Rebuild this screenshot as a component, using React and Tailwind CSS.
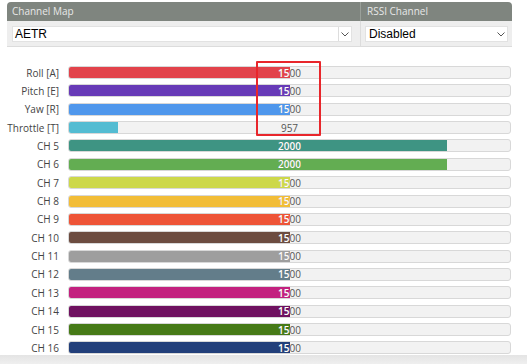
import React from 'react';

const channels = [
  { label: 'Roll [A]', value: 1500, color: '#e2434b' },
  { label: 'Pitch [E]', value: 1500, color: '#673ab7' },
  { label: 'Yaw [R]', value: 1500, color: '#4f97ec' },
  { label: 'Throttle [T]', value: 957, color: '#54bcd2' },
  { label: 'CH 5', value: 2000, color: '#3e9483' },
  { label: 'CH 6', value: 2000, color: '#63ad52' },
  { label: 'CH 7', value: 1500, color: '#cdd84a' },
  { label: 'CH 8', value: 1500, color: '#f2bd37' },
  { label: 'CH 9', value: 1500, color: '#ee5437' },
  { label: 'CH 10', value: 1500, color: '#6c4c40' },
  { label: 'CH 11', value: 1500, color: '#9e9e9e' },
  { label: 'CH 12', value: 1500, color: '#637d8a' },
  { label: 'CH 13', value: 1500, color: '#c3217f' },
  { label: 'CH 14', value: 1500, color: '#6f1160' },
  { label: 'CH 15', value: 1500, color: '#467a17' },
  { label: 'CH 16', value: 1500, color: '#223f7a' },
];

const TRACK = 441;

function Chevron() {
  return (
    <svg width="8" height="5" viewBox="0 0 8 5" className="text-[#555]">
      <polyline points="0.5,0.5 4,4 7.5,0.5" fill="none" stroke="currentColor" strokeWidth="1" />
    </svg>
  );
}

function ChannelBar({ label, value, color }) {
  // range shown is 800..2200
  const fill = Math.round((TRACK * (value - 800)) / 1400);
  return (
    <div className="flex items-center h-[13px]">
      <div className="w-[59px] mr-[9px] text-right text-[10px] leading-none text-[#444] whitespace-nowrap">{label}</div>
      <div className="relative w-[443px] h-[13px] rounded-[3px] border border-[#d8d8d8] bg-[#f2f2f2]">
        <div className="h-full rounded-l-[2px]" style={{ width: fill, backgroundColor: color }} />
        <div className="absolute inset-0 flex items-center justify-center text-[10px] leading-none text-[#555]">{value}</div>
        <div className="absolute left-0 top-0 h-full overflow-hidden" style={{ width: fill }}>
          <div className="w-[441px] h-full flex items-center justify-center text-[10px] leading-none text-white font-semibold">{value}</div>
        </div>
      </div>
    </div>
  );
}

export default function App() {
  return (
    <div className="relative w-[527px] h-[364px] bg-white overflow-hidden flex flex-col font-['Open_Sans',sans-serif]">
      <div className="ml-[7px] mt-[2px] w-[505px] rounded-t-[4px] overflow-hidden border-b border-[#dcdcdc] grid grid-cols-[353px_152px]">
        <div className="h-[19px] bg-[#7f857f] text-[10px] text-[#e8e8e8] pl-[5px] flex items-center">Channel Map</div>
        <div className="h-[19px] bg-[#7f857f] border-l border-[#9aa09a] text-[10px] text-[#e8e8e8] pl-[6px] flex items-center">RSSI Channel</div>
        <div className="h-[25px] bg-[#eeeeee] pl-[5px] pt-[5px]">
          <div className="w-[340px] h-[16px] bg-white border border-[#e2e2e2] flex items-center font-['Liberation_Sans',Arial,sans-serif] text-[12px] text-black">
            <span className="flex-1 pl-[2px]">AETR</span>
            <span className="w-[13px] h-full border-l border-[#dddddd] flex items-center justify-center"><Chevron /></span>
          </div>
        </div>
        <div className="h-[25px] bg-[#eeeeee] border-l border-[#dcdcdc] pl-[4px] pt-[5px]">
          <div className="w-[143px] h-[16px] bg-white border border-[#e2e2e2] flex items-center font-['Liberation_Sans',Arial,sans-serif] text-[12px] text-black">
            <span className="flex-1 pl-[3px]">Disabled</span>
            <span className="w-[12px] flex items-center justify-center"><Chevron /></span>
          </div>
        </div>
      </div>

      <div className="mt-[19px] flex flex-col gap-[5.37px]">
        {channels.map((c) => (
          <ChannelBar key={c.label} {...c} />
        ))}
      </div>

      <div className="mt-auto h-[9px] bg-gradient-to-b from-[#e4e4e4] to-[#efefef]" />

      <div className="absolute left-[256px] top-[61px] w-[65px] h-[75px] border-2 border-[#e8262b] rounded-[1px]" />
    </div>
  );
}
